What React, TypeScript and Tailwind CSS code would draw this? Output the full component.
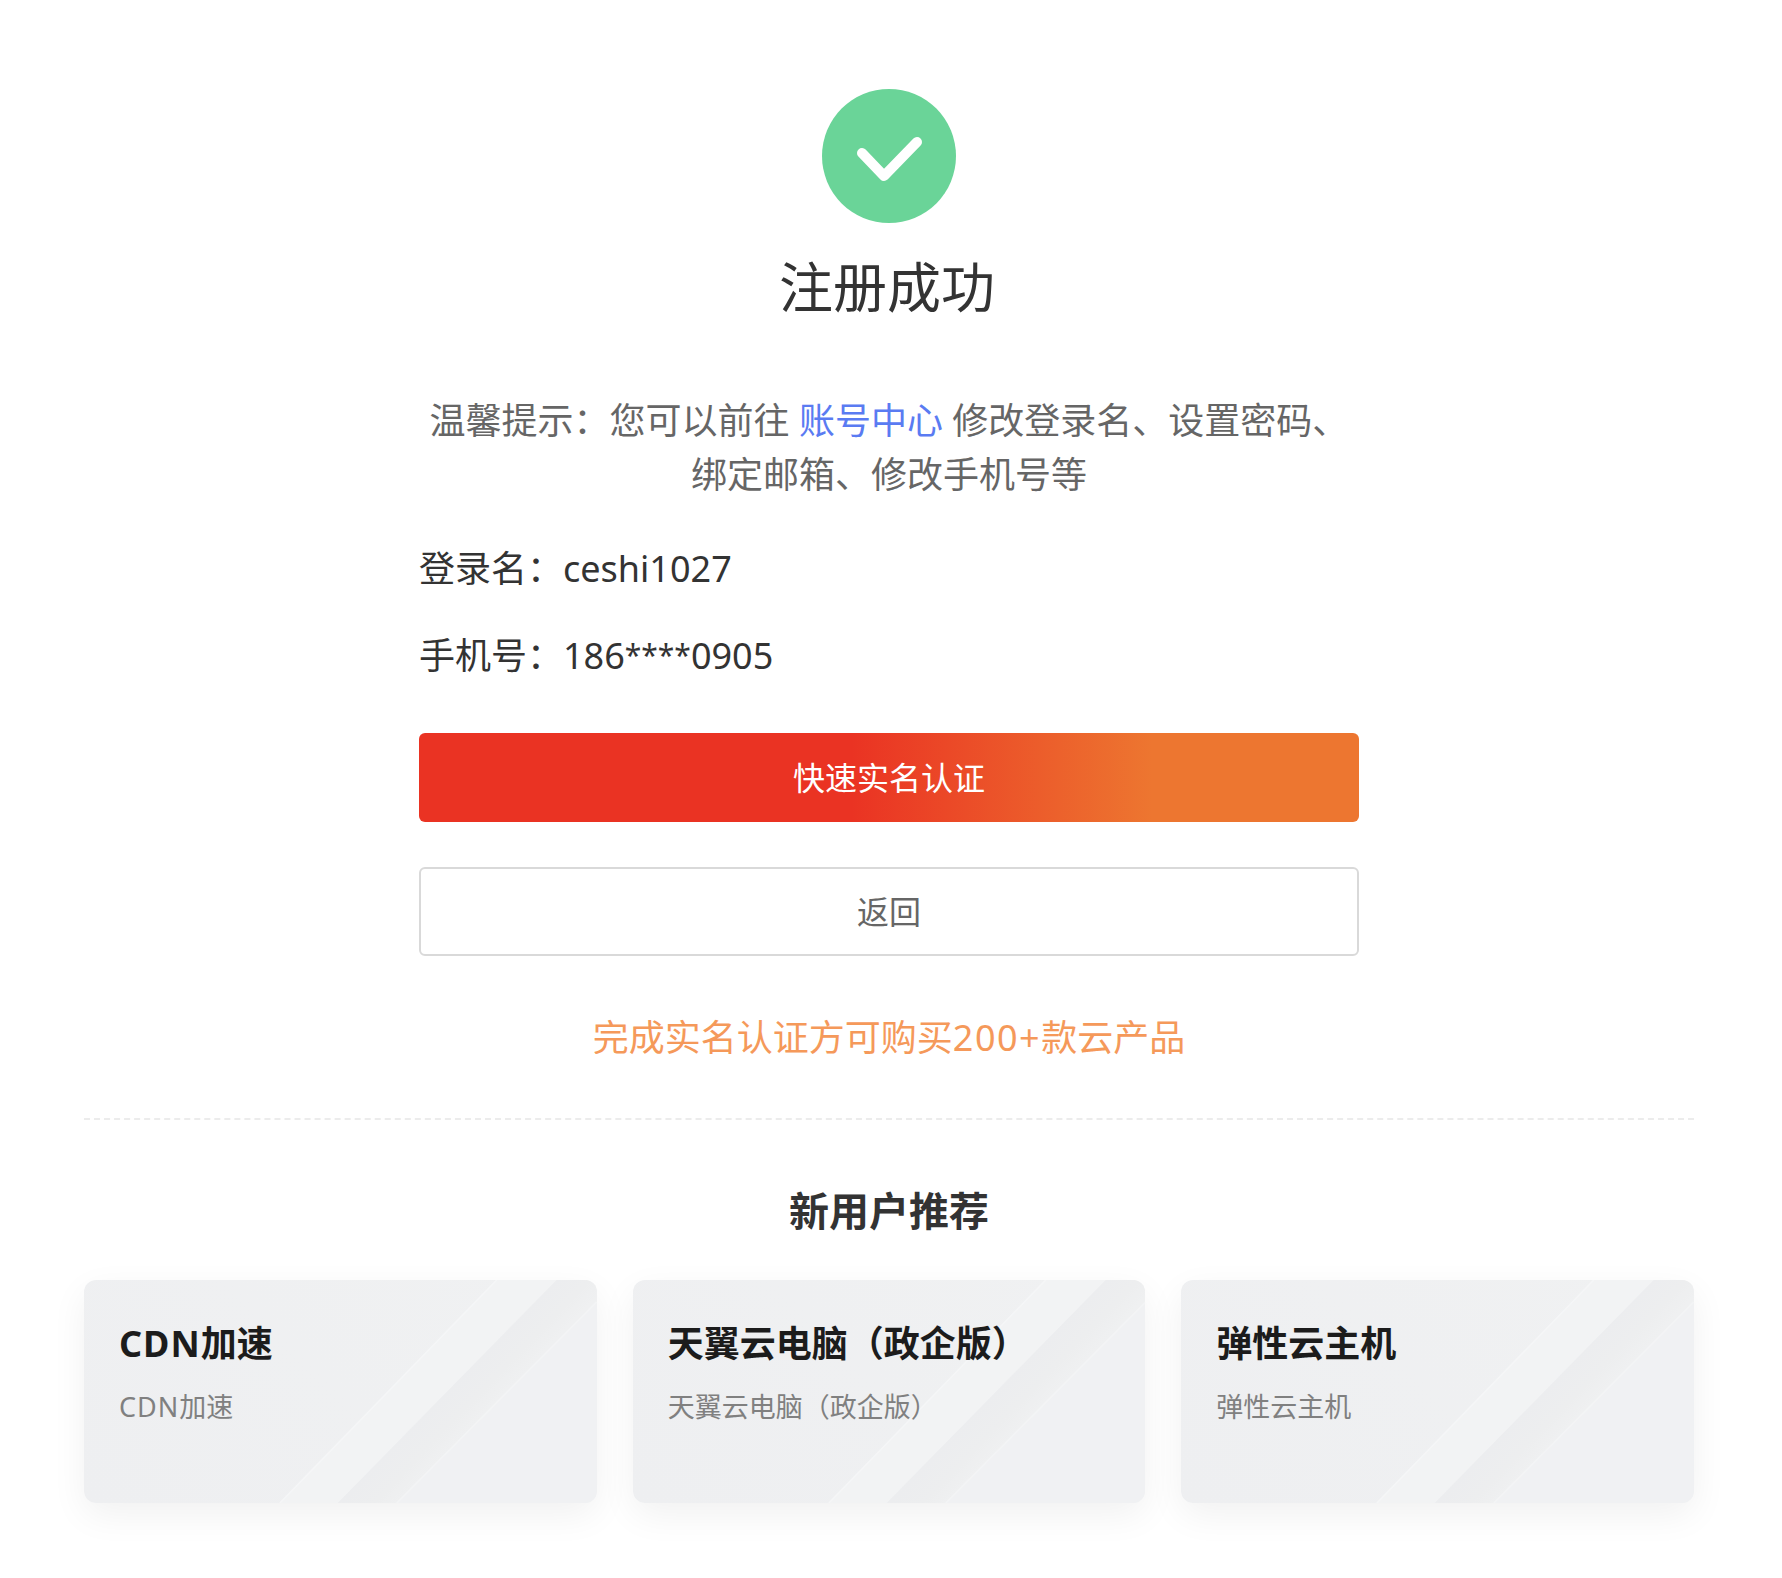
import React from 'react';

const cards = [
  { latin: 'CDN', title: '加速', desc: '加速' },
  { latin: '', title: '天翼云电脑（政企版）', desc: '天翼云电脑（政企版）' },
  { latin: '', title: '弹性云主机', desc: '弹性云主机' },
];

function CardBg({ id }: { id: string }) {
  return (
    <svg className="absolute inset-0 h-full w-full" viewBox="0 0 513 223" preserveAspectRatio="none" aria-hidden="true">
      <defs>
        {/* gradients run across the stripe, not along it */}
        <linearGradient id={`light-${id}`} gradientUnits="userSpaceOnUse" x1="305" y1="112" x2="335" y2="141">
          <stop offset="0" stopColor="#f2f3f4" />
          <stop offset="1" stopColor="#f2f3f4" />
        </linearGradient>
        <linearGradient id={`dark-${id}`} gradientUnits="userSpaceOnUse" x1="363" y1="112" x2="393" y2="141">
          <stop offset="0" stopColor="#ecedef" />
          <stop offset="0.6" stopColor="#edeeef" />
          <stop offset="1" stopColor="#eff0f1" />
        </linearGradient>
      </defs>
      <polygon points="196,223 413,0 473,0 254,223" fill={`url(#light-${id})`} />
      <polygon points="254,223 473,0 513,0 513,22 313,223" fill={`url(#dark-${id})`} />
      <polygon points="313,223 513,22 513,223" fill="#f0f1f3" />
      <line x1="196" y1="223" x2="413" y2="0" stroke="#f5f6f7" strokeWidth="1.5" />
      <line x1="313" y1="223" x2="513" y2="22" stroke="#f3f4f5" strokeWidth="1.5" />
    </svg>
  );
}

export default function App() {
  return (
    <main className="min-h-[1578px] w-[1778px] bg-white pt-[89px] font-['Noto_Sans','Noto_Sans_CJK_SC',sans-serif] text-[#333]">
      <div className="flex flex-col items-center">
        <div className="h-[134px] w-[134px] rounded-full bg-[#6ad498]">
          <svg viewBox="0 0 134 134" className="h-full w-full" aria-hidden="true">
            <path d="M40 64 L62 87 L95 53" fill="none" stroke="#fff" strokeWidth="10" strokeLinecap="round" strokeLinejoin="round" />
          </svg>
        </div>
        <h1 className="mt-[26px] pr-[4px] text-[54px] leading-[76px] font-normal">注册成功</h1>
      </div>

      <div className="mx-auto mt-[69px] w-[940px]">
        <p className="text-center text-[36px] leading-[54px] text-[#666]">
          温馨提示：您可以前往 <span className="text-[#5a7bf2]">账号中心</span> 修改登录名、设置密码、绑定邮箱、修改手机号等
        </p>
        <div className="mt-[40px] text-[36px] leading-[54px]">
          <p>登录名：ceshi1027</p>
          <p className="mt-[33px]">
            手机号：186<span className="align-[3px] text-[30px] leading-none">****</span>0905
          </p>
        </div>
        <button className="mt-[50px] flex h-[89px] w-full items-center justify-center rounded-[6px] bg-[linear-gradient(90deg,#ea3323_0%,#ea3323_46%,#ed7630_78%,#ed7630_100%)] text-[32px] text-white">
          快速实名认证
        </button>
        <button className="mt-[45px] flex h-[89px] w-full items-center justify-center rounded-[6px] border-2 border-[#d9d9d9] bg-white text-[32px] text-[#666]">
          返回
        </button>
        <p className="mt-[55px] text-center text-[36px] leading-[54px] text-[#f5995a]">
          完成实名认证方可购买<span className="tracking-[1.5px]">200+</span>款云产品
        </p>
      </div>

      <div className="mx-[84px] mt-[53px] border-t-2 border-dashed border-[#ececec]">
        <h2 className="mt-[63px] text-center text-[40px] leading-[56px] font-bold">新用户推荐</h2>
        <div className="mt-[41px] grid grid-cols-3 gap-[36px]">
          {cards.map((c, i) => (
            <div key={c.title} className="relative h-[223px] overflow-hidden rounded-[12px] bg-[linear-gradient(45deg,#eeeff1,#f0f1f2)] px-[35px] pt-[39px] shadow-[0_12px_36px_rgba(0,0,0,0.06)]">
              <CardBg id={String(i)} />
              <div className="relative">
                <h3 className="text-[36px] leading-[50px] font-bold text-[#1c1c1c]">
                  {c.latin && <span className="tracking-[1px]">{c.latin}</span>}
                  {c.title}
                </h3>
                <p className="mt-[19px] text-[27px] leading-[38px] text-[#808080]">
                  {c.latin && <span className="tracking-[1px]">{c.latin}</span>}
                  {c.desc}
                </p>
              </div>
            </div>
          ))}
        </div>
      </div>
    </main>
  );
}
